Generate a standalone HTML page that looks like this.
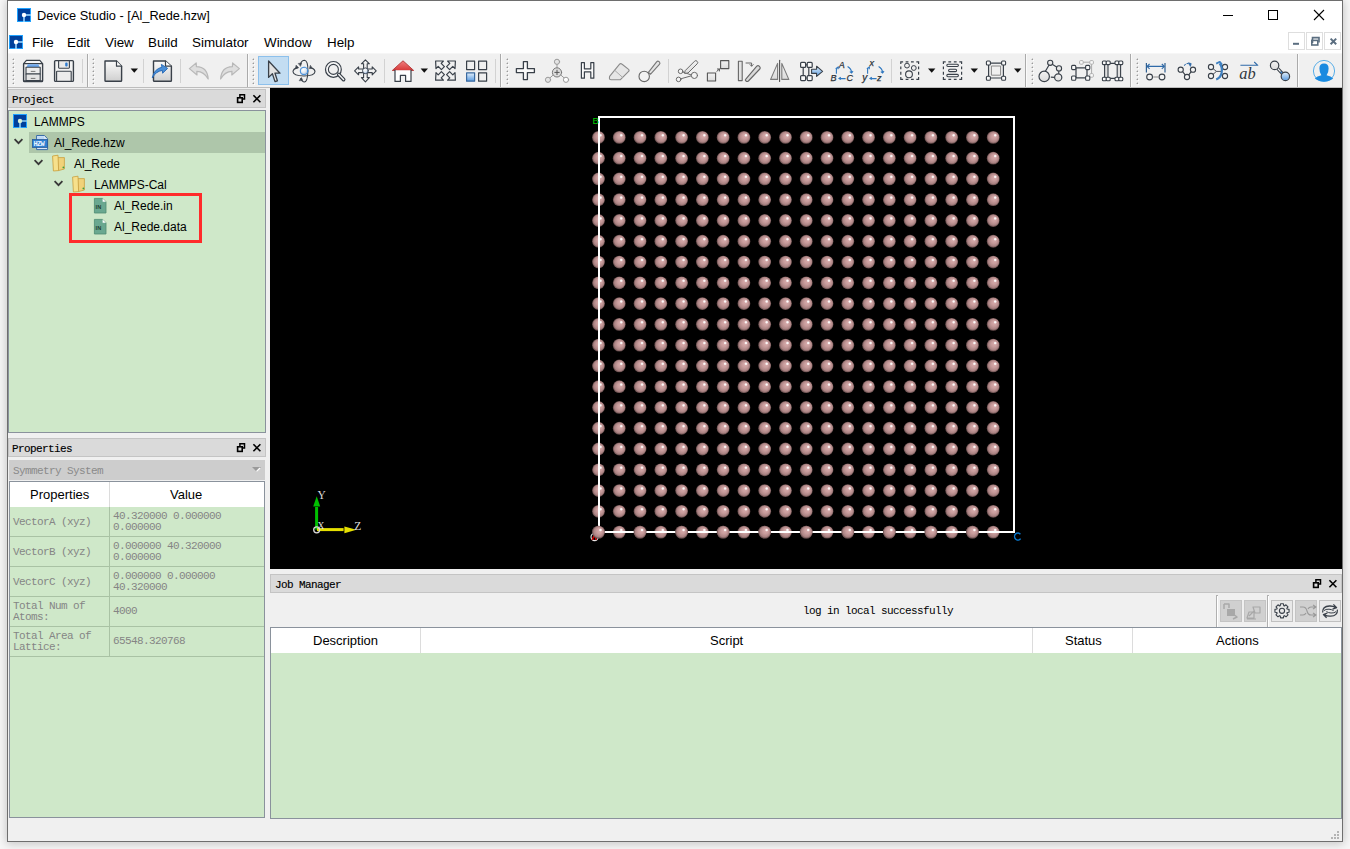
<!DOCTYPE html>
<html><head><meta charset="utf-8">
<style>
*{margin:0;padding:0;box-sizing:border-box}
html,body{width:1350px;height:849px;overflow:hidden;background:#f7f7f7;font-family:"Liberation Sans",sans-serif;color:#000}
.a{position:absolute}
.t{position:absolute;white-space:nowrap;line-height:1}
.m{font-family:"Liberation Mono",monospace;letter-spacing:-0.6px}
.g{position:absolute;background:#cfe8c9}
</style></head><body>
<!-- desktop shadow -->
<!-- window -->
<div class="a" style="left:7px;top:0;width:1336px;height:842px;border:1px solid #6e6e6e;background:#f0f0f0;box-shadow:0 1px 9px 1px rgba(0,0,0,0.2)"></div>
<div class="a" style="left:8px;top:1px;width:1334px;height:52px;background:#fff"></div>
<div class="a" style="left:8px;top:53px;width:1334px;height:1px;background:#f6f6f6"></div>
<!-- title bar -->
<svg class="a" style="left:0;top:0" width="40" height="50">
<rect x="17.5" y="8.5" width="13" height="13" fill="#00419c" stroke="#1fa2ff" stroke-width="1"/>
<path d="M24,15 H31" stroke="#9ad8ff" stroke-width="1.6"/><path d="M24,15 V22" stroke="#9ad8ff" stroke-width="1.6"/>
<circle cx="24" cy="15" r="2.2" fill="#fff"/>
<rect x="9.5" y="35.5" width="13" height="13" fill="#00419c" stroke="#1fa2ff" stroke-width="1"/>
<path d="M16,42 H23" stroke="#9ad8ff" stroke-width="1.6"/><path d="M16,42 V49" stroke="#9ad8ff" stroke-width="1.6"/>
<circle cx="16" cy="42" r="2.2" fill="#fff"/>
</svg>
<div class="t" style="left:37px;top:10px;font-size:12.8px">Device Studio - [Al_Rede.hzw]</div>
<div class="a" style="left:1223px;top:15px;width:10px;height:1px;background:#000"></div>
<div class="a" style="left:1268px;top:10px;width:10px;height:10px;border:1px solid #000"></div>
<svg class="a" style="left:1312px;top:8px" width="14" height="14"><path d="M2,2 L12,12 M12,2 L2,12" stroke="#000" stroke-width="1.1"/></svg>
<!-- menu -->
<div class="t" style="left:32px;top:36.4px;font-size:13.4px">File</div>
<div class="t" style="left:67px;top:36.4px;font-size:13.4px">Edit</div>
<div class="t" style="left:105px;top:36.4px;font-size:13.4px">View</div>
<div class="t" style="left:148px;top:36.4px;font-size:13.4px">Build</div>
<div class="t" style="left:192px;top:36.4px;font-size:13.4px">Simulator</div>
<div class="t" style="left:264px;top:36.4px;font-size:13.4px">Window</div>
<div class="t" style="left:327px;top:36.4px;font-size:13.4px">Help</div>
<!-- mdi buttons -->
<div class="a" style="left:1288px;top:32px;width:17px;height:18px;border:1px solid #dedede"></div>
<div class="a" style="left:1306px;top:32px;width:17px;height:18px;border:1px solid #dedede"></div>
<div class="a" style="left:1324px;top:32px;width:17px;height:18px;border:1px solid #dedede"></div>
<svg class="a" style="left:1288px;top:32px" width="54" height="18">
<rect x="5" y="10.8" width="6" height="2" fill="#5b6e80"/>
<path d="M24.5,11 V5.6 H31 V10.4" fill="none" stroke="#5b6e80" stroke-width="1.6"/>
<rect x="23.8" y="8.4" width="6" height="4.6" fill="none" stroke="#5b6e80" stroke-width="1.6"/>
<path d="M42.6,6.6 L48.2,12.2 M48.2,6.6 L42.6,12.2" stroke="#5b6e80" stroke-width="2"/>
</svg>
<!-- toolbar -->
<div class="a" style="left:8px;top:54px;width:1334px;height:33px;background:#f0f0f0"></div>
<div class="a" style="left:8px;top:87px;width:1334px;height:1px;background:#bdbdbd"></div>
<div class="a" style="left:13px;top:59px;width:1px;height:1px;background:#9a9a9a;box-shadow:-1px 0 #cdcdcd,0 -1px #cdcdcd,1px 1px #fff"></div>
<div class="a" style="left:13px;top:63px;width:1px;height:1px;background:#9a9a9a;box-shadow:-1px 0 #cdcdcd,0 -1px #cdcdcd,1px 1px #fff"></div>
<div class="a" style="left:13px;top:67px;width:1px;height:1px;background:#9a9a9a;box-shadow:-1px 0 #cdcdcd,0 -1px #cdcdcd,1px 1px #fff"></div>
<div class="a" style="left:13px;top:71px;width:1px;height:1px;background:#9a9a9a;box-shadow:-1px 0 #cdcdcd,0 -1px #cdcdcd,1px 1px #fff"></div>
<div class="a" style="left:13px;top:75px;width:1px;height:1px;background:#9a9a9a;box-shadow:-1px 0 #cdcdcd,0 -1px #cdcdcd,1px 1px #fff"></div>
<div class="a" style="left:13px;top:79px;width:1px;height:1px;background:#9a9a9a;box-shadow:-1px 0 #cdcdcd,0 -1px #cdcdcd,1px 1px #fff"></div>
<div class="a" style="left:13px;top:83px;width:1px;height:1px;background:#9a9a9a;box-shadow:-1px 0 #cdcdcd,0 -1px #cdcdcd,1px 1px #fff"></div>
<div class="a" style="left:93px;top:59px;width:1px;height:1px;background:#9a9a9a;box-shadow:-1px 0 #cdcdcd,0 -1px #cdcdcd,1px 1px #fff"></div>
<div class="a" style="left:93px;top:63px;width:1px;height:1px;background:#9a9a9a;box-shadow:-1px 0 #cdcdcd,0 -1px #cdcdcd,1px 1px #fff"></div>
<div class="a" style="left:93px;top:67px;width:1px;height:1px;background:#9a9a9a;box-shadow:-1px 0 #cdcdcd,0 -1px #cdcdcd,1px 1px #fff"></div>
<div class="a" style="left:93px;top:71px;width:1px;height:1px;background:#9a9a9a;box-shadow:-1px 0 #cdcdcd,0 -1px #cdcdcd,1px 1px #fff"></div>
<div class="a" style="left:93px;top:75px;width:1px;height:1px;background:#9a9a9a;box-shadow:-1px 0 #cdcdcd,0 -1px #cdcdcd,1px 1px #fff"></div>
<div class="a" style="left:93px;top:79px;width:1px;height:1px;background:#9a9a9a;box-shadow:-1px 0 #cdcdcd,0 -1px #cdcdcd,1px 1px #fff"></div>
<div class="a" style="left:93px;top:83px;width:1px;height:1px;background:#9a9a9a;box-shadow:-1px 0 #cdcdcd,0 -1px #cdcdcd,1px 1px #fff"></div>
<div class="a" style="left:253px;top:59px;width:1px;height:1px;background:#9a9a9a;box-shadow:-1px 0 #cdcdcd,0 -1px #cdcdcd,1px 1px #fff"></div>
<div class="a" style="left:253px;top:63px;width:1px;height:1px;background:#9a9a9a;box-shadow:-1px 0 #cdcdcd,0 -1px #cdcdcd,1px 1px #fff"></div>
<div class="a" style="left:253px;top:67px;width:1px;height:1px;background:#9a9a9a;box-shadow:-1px 0 #cdcdcd,0 -1px #cdcdcd,1px 1px #fff"></div>
<div class="a" style="left:253px;top:71px;width:1px;height:1px;background:#9a9a9a;box-shadow:-1px 0 #cdcdcd,0 -1px #cdcdcd,1px 1px #fff"></div>
<div class="a" style="left:253px;top:75px;width:1px;height:1px;background:#9a9a9a;box-shadow:-1px 0 #cdcdcd,0 -1px #cdcdcd,1px 1px #fff"></div>
<div class="a" style="left:253px;top:79px;width:1px;height:1px;background:#9a9a9a;box-shadow:-1px 0 #cdcdcd,0 -1px #cdcdcd,1px 1px #fff"></div>
<div class="a" style="left:253px;top:83px;width:1px;height:1px;background:#9a9a9a;box-shadow:-1px 0 #cdcdcd,0 -1px #cdcdcd,1px 1px #fff"></div>
<div class="a" style="left:507px;top:59px;width:1px;height:1px;background:#9a9a9a;box-shadow:-1px 0 #cdcdcd,0 -1px #cdcdcd,1px 1px #fff"></div>
<div class="a" style="left:507px;top:63px;width:1px;height:1px;background:#9a9a9a;box-shadow:-1px 0 #cdcdcd,0 -1px #cdcdcd,1px 1px #fff"></div>
<div class="a" style="left:507px;top:67px;width:1px;height:1px;background:#9a9a9a;box-shadow:-1px 0 #cdcdcd,0 -1px #cdcdcd,1px 1px #fff"></div>
<div class="a" style="left:507px;top:71px;width:1px;height:1px;background:#9a9a9a;box-shadow:-1px 0 #cdcdcd,0 -1px #cdcdcd,1px 1px #fff"></div>
<div class="a" style="left:507px;top:75px;width:1px;height:1px;background:#9a9a9a;box-shadow:-1px 0 #cdcdcd,0 -1px #cdcdcd,1px 1px #fff"></div>
<div class="a" style="left:507px;top:79px;width:1px;height:1px;background:#9a9a9a;box-shadow:-1px 0 #cdcdcd,0 -1px #cdcdcd,1px 1px #fff"></div>
<div class="a" style="left:507px;top:83px;width:1px;height:1px;background:#9a9a9a;box-shadow:-1px 0 #cdcdcd,0 -1px #cdcdcd,1px 1px #fff"></div>
<div class="a" style="left:1032px;top:59px;width:1px;height:1px;background:#9a9a9a;box-shadow:-1px 0 #cdcdcd,0 -1px #cdcdcd,1px 1px #fff"></div>
<div class="a" style="left:1032px;top:63px;width:1px;height:1px;background:#9a9a9a;box-shadow:-1px 0 #cdcdcd,0 -1px #cdcdcd,1px 1px #fff"></div>
<div class="a" style="left:1032px;top:67px;width:1px;height:1px;background:#9a9a9a;box-shadow:-1px 0 #cdcdcd,0 -1px #cdcdcd,1px 1px #fff"></div>
<div class="a" style="left:1032px;top:71px;width:1px;height:1px;background:#9a9a9a;box-shadow:-1px 0 #cdcdcd,0 -1px #cdcdcd,1px 1px #fff"></div>
<div class="a" style="left:1032px;top:75px;width:1px;height:1px;background:#9a9a9a;box-shadow:-1px 0 #cdcdcd,0 -1px #cdcdcd,1px 1px #fff"></div>
<div class="a" style="left:1032px;top:79px;width:1px;height:1px;background:#9a9a9a;box-shadow:-1px 0 #cdcdcd,0 -1px #cdcdcd,1px 1px #fff"></div>
<div class="a" style="left:1032px;top:83px;width:1px;height:1px;background:#9a9a9a;box-shadow:-1px 0 #cdcdcd,0 -1px #cdcdcd,1px 1px #fff"></div>
<div class="a" style="left:1137px;top:59px;width:1px;height:1px;background:#9a9a9a;box-shadow:-1px 0 #cdcdcd,0 -1px #cdcdcd,1px 1px #fff"></div>
<div class="a" style="left:1137px;top:63px;width:1px;height:1px;background:#9a9a9a;box-shadow:-1px 0 #cdcdcd,0 -1px #cdcdcd,1px 1px #fff"></div>
<div class="a" style="left:1137px;top:67px;width:1px;height:1px;background:#9a9a9a;box-shadow:-1px 0 #cdcdcd,0 -1px #cdcdcd,1px 1px #fff"></div>
<div class="a" style="left:1137px;top:71px;width:1px;height:1px;background:#9a9a9a;box-shadow:-1px 0 #cdcdcd,0 -1px #cdcdcd,1px 1px #fff"></div>
<div class="a" style="left:1137px;top:75px;width:1px;height:1px;background:#9a9a9a;box-shadow:-1px 0 #cdcdcd,0 -1px #cdcdcd,1px 1px #fff"></div>
<div class="a" style="left:1137px;top:79px;width:1px;height:1px;background:#9a9a9a;box-shadow:-1px 0 #cdcdcd,0 -1px #cdcdcd,1px 1px #fff"></div>
<div class="a" style="left:1137px;top:83px;width:1px;height:1px;background:#9a9a9a;box-shadow:-1px 0 #cdcdcd,0 -1px #cdcdcd,1px 1px #fff"></div>
<div class="a" style="left:82px;top:59px;width:1px;height:24px;background:#d2d2d2"></div>
<div class="a" style="left:143px;top:59px;width:1px;height:24px;background:#d2d2d2"></div>
<div class="a" style="left:180px;top:59px;width:1px;height:24px;background:#d2d2d2"></div>
<div class="a" style="left:384px;top:59px;width:1px;height:24px;background:#d2d2d2"></div>
<div class="a" style="left:495px;top:59px;width:1px;height:24px;background:#d2d2d2"></div>
<div class="a" style="left:668px;top:59px;width:1px;height:24px;background:#d2d2d2"></div>
<div class="a" style="left:891px;top:59px;width:1px;height:24px;background:#d2d2d2"></div>
<div class="a" style="left:87px;top:54px;width:1px;height:33px;background:#aaaaaa"></div><div class="a" style="left:88px;top:54px;width:1px;height:33px;background:#fafafa"></div>
<div class="a" style="left:247px;top:54px;width:1px;height:33px;background:#aaaaaa"></div><div class="a" style="left:248px;top:54px;width:1px;height:33px;background:#fafafa"></div>
<div class="a" style="left:500px;top:54px;width:1px;height:33px;background:#aaaaaa"></div><div class="a" style="left:501px;top:54px;width:1px;height:33px;background:#fafafa"></div>
<div class="a" style="left:1025px;top:54px;width:1px;height:33px;background:#aaaaaa"></div><div class="a" style="left:1026px;top:54px;width:1px;height:33px;background:#fafafa"></div>
<div class="a" style="left:1130px;top:54px;width:1px;height:33px;background:#aaaaaa"></div><div class="a" style="left:1131px;top:54px;width:1px;height:33px;background:#fafafa"></div>
<div class="a" style="left:1297px;top:54px;width:1px;height:33px;background:#aaaaaa"></div><div class="a" style="left:1298px;top:54px;width:1px;height:33px;background:#fafafa"></div><svg class="a" style="left:0;top:0" width="1350" height="100" viewBox="0 0 1350 100">
<defs>
<linearGradient id="gg" x1="0" y1="0" x2="0" y2="1"><stop offset="0" stop-color="#fbfbfb"/><stop offset="1" stop-color="#cfcfcf"/></linearGradient>
<linearGradient id="gl" x1="0" y1="0" x2="0" y2="1"><stop offset="0" stop-color="#f2f2f2"/><stop offset="1" stop-color="#dcdcdc"/></linearGradient>
<radialGradient id="gb" cx="0.4" cy="0.35" r="0.7"><stop offset="0" stop-color="#ffffff"/><stop offset="0.35" stop-color="#9cc6f2"/><stop offset="1" stop-color="#2f78c8"/></radialGradient>
<radialGradient id="gsph" cx="0.4" cy="0.35" r="0.75"><stop offset="0" stop-color="#ffffff"/><stop offset="0.5" stop-color="#dfe8f2"/><stop offset="1" stop-color="#6d9fd8"/></radialGradient>
<linearGradient id="gbl" x1="0" y1="0" x2="0" y2="1"><stop offset="0" stop-color="#e4f0fb"/><stop offset="1" stop-color="#5a9be0"/></linearGradient>
<linearGradient id="gred" x1="0" y1="0" x2="0" y2="1"><stop offset="0" stop-color="#f08080"/><stop offset="1" stop-color="#d83a3a"/></linearGradient>
</defs>
<g fill="none" stroke="#394049" stroke-width="1.4" stroke-linejoin="round" stroke-linecap="round">
<!-- open cabinet -->
<path d="M23.6,64 V80.8 Q23.6,81.6 24.4,81.6 H41.8 Q42.6,81.6 42.6,80.8 V64" fill="#f4f4f4"/>
<path d="M26.4,60.4 H39.8 L42.6,63.6 H23.6 Z" fill="#f6f6f6" stroke-width="1.2"/>
<path d="M27.8,64.2 H38.4 L39.6,67 H26.6 Z" fill="#6ea8ee" stroke="none"/>
<rect x="26" y="67.2" width="14.2" height="6.8" fill="#ededed" stroke-width="1.1"/>
<rect x="26" y="74" width="14.2" height="6.6" fill="#e4e4e4" stroke-width="1.1"/>
<path d="M31.2,71.4 H35 M31.2,78.4 H35" stroke="#6a6a6a" stroke-width="0.9"/>
<path d="M24.4,81 H41.8" stroke-width="1.4"/>
<!-- save -->
<rect x="54.6" y="60.6" width="18.8" height="20.8" rx="1" fill="#f3f3f3"/>
<rect x="58.6" y="60.6" width="10.8" height="7.6" rx="0.6" fill="#eaeaea" stroke-width="1.1"/>
<rect x="65.2" y="62.4" width="2.4" height="4.2" rx="1" fill="#2f7cd0" stroke="none"/>
<rect x="56.6" y="71.2" width="14.6" height="10.2" rx="0.6" fill="#ececec" stroke-width="1.1"/>
<!-- new doc -->
<path d="M105,61 H116.5 L121.6,66.2 V80.4 Q121.6,81.2 120.8,81.2 H105.8 Q105,81.2 105,80.4 Z" fill="url(#gg)"/>
<path d="M116.5,61 V66.2 H121.6" fill="#fff" stroke-width="1.2"/>
<!-- export doc -->
<path d="M153.5,61 H165.5 L171.4,66.2 V80.4 Q171.4,81.2 170.6,81.2 H154.3 Q153.5,81.2 153.5,80.4 Z" fill="url(#gg)"/>
<path d="M165.5,61 V66.2 H171.4" fill="#fff" stroke-width="1.2"/>
<path d="M152.4,77.5 Q154,69 162,67.2 L161.4,64.4 L167.6,68.4 L162.6,73.2 L162.4,70.4 Q156,71.2 152.4,77.5 Z" fill="#4a8fd8" stroke="#2a6cb8" stroke-width="1"/>
<!-- undo redo -->
<path d="M189.4,68.6 L196.2,63 L196.4,66.6 Q207.4,66.8 208.2,79 Q204,71.6 196.8,71.4 L197,75 Z" fill="#dedede" stroke="#b8b8b8" stroke-width="1.2"/>
<path d="M239.4,68.6 L232.6,63 L232.4,66.6 Q221.4,66.8 220.6,79 Q224.8,71.6 232,71.4 L231.8,75 Z" fill="#dedede" stroke="#b8b8b8" stroke-width="1.2"/>
</g>
<!-- dropdown triangles -->
<g fill="#111">
<path d="M130.6,68.6 H138 L134.3,72.8 Z"/>
<path d="M420.6,68.6 H428 L424.3,72.8 Z"/>
<path d="M928,68.6 H935.4 L931.7,72.8 Z"/>
<path d="M970.6,68.6 H978 L974.3,72.8 Z"/>
<path d="M1014,68.6 H1021.4 L1017.7,72.8 Z"/>
</g>
<!-- selected button -->
<rect x="258.5" y="56.5" width="30" height="28" fill="#c3ddf2" stroke="#8cc0ec" stroke-width="1"/>
<g fill="none" stroke="#394049" stroke-width="1.3" stroke-linejoin="round" stroke-linecap="round">
<path d="M268.6,61 V77.4 L272.4,73.8 L275,81.6 L277.4,80.8 L275,73.2 H280 Z" fill="#e2e2e2"/>
<!-- rotate -->
<path d="M297.6,67.6 Q293,68.8 293,71.8 Q293.4,75.8 304,76 Q314.6,75.8 315,71.8 Q315,69.4 311.8,68" stroke-width="1.1"/>
<path d="M300.4,64 Q301.8,60.2 304.6,60.2 Q308,60.6 307.9,71 Q307.6,81.8 304.4,82 Q302.2,81.8 300.8,78.6" stroke-width="1.1"/>
<path d="M296.4,65.4 L298.6,67.8 L295.6,68.6 Z M310.6,65.6 L312.2,68.4 L309.6,68.6 Z M298.6,63.4 L301.6,63.2 L300.6,66 Z M299.4,80.4 L301.4,77.6 L302.6,80.2 Z" fill="#394049" stroke-width="0.6"/>
<circle cx="304" cy="71" r="3.8" fill="url(#gsph)" stroke="#3a88d8" stroke-width="1"/>
<!-- zoom -->
<circle cx="333.4" cy="69.4" r="7.9" fill="#f6f6f6" stroke-width="1.2"/>
<circle cx="333.4" cy="69.4" r="5" fill="#f0f0f0" stroke-width="1.1"/>
<path d="M338.8,74.6 L343.6,79.6" stroke-width="3.8"/>
<path d="M338.8,74.6 L343.6,79.6" stroke="#f4f4f4" stroke-width="1.4"/>
<!-- move -->
<path d="M365.4,59.8 L369.4,63.8 H367.2 V69 H372.2 V66.8 L376.2,70.8 L372.2,74.8 V72.6 H367.2 V77.6 H369.4 L365.4,81.8 L361.4,77.6 H363.6 V72.6 H358.6 V74.8 L354.6,70.8 L358.6,66.8 V69 H363.6 V63.8 H361.4 Z" fill="#f2f2f2" stroke-width="1.1"/>
<circle cx="365.4" cy="70.8" r="2.9" fill="url(#gsph)" stroke="#394049" stroke-width="0.9"/>
<!-- home -->
<path d="M392.6,70.2 L403,60.8 L413.4,70.2 Z" fill="url(#gred)" stroke="#b84040" stroke-width="1"/>
<path d="M395,70.2 V81.4 H400.4 V75.4 H405.6 V81.4 H411 V70.2" fill="#fff" stroke-width="1.2"/>
<!-- fit -->
<g stroke-width="1.2">
<path d="M435.6,61 H443.4 L441.2,63.4 L444.4,66.6 L441.4,69.6 L438.2,66.4 L436,68.6 Z"/>
<path d="M455.4,61 H447.6 L449.8,63.4 L446.6,66.6 L449.6,69.6 L452.8,66.4 L455,68.6 Z"/>
<path d="M435.6,80.2 H443.4 L441.2,77.8 L444.4,74.6 L441.4,71.6 L438.2,74.8 L436,72.6 Z"/>
<path d="M455.4,80.2 H447.6 L449.8,77.8 L446.6,74.6 L449.6,71.6 L452.8,74.8 L455,72.6 Z"/>
</g>
<!-- grid -->
<rect x="466.6" y="61.2" width="8" height="8.4" stroke-width="1.2"/>
<rect x="478.6" y="61.2" width="8" height="8.4" stroke-width="1.2"/>
<rect x="466.6" y="72.8" width="8" height="8.4" fill="url(#gbl)" stroke="#3a6aa0" stroke-width="1.2"/>
<rect x="478.6" y="72.8" width="8" height="8.4" stroke-width="1.2"/>
<!-- plus -->
<path d="M523.4,61.6 H527.4 V68.6 H534.4 V72.6 H527.4 V79.6 H523.4 V72.6 H516.4 V68.6 H523.4 Z" fill="#fafafa" stroke-width="1.3"/>
<!-- atom add -->
<g stroke="#9a9a9a" stroke-width="1">
<path d="M557,64 V68 M553.6,74.6 L549.6,78.2 M560.4,74.6 L564.4,78.2"/>
<circle cx="557" cy="61.8" r="2.6" fill="#e4e4e4"/>
<circle cx="548" cy="79.8" r="2.6" fill="#e4e4e4"/>
<circle cx="566" cy="79.8" r="2.6" fill="#fff"/>
<circle cx="557" cy="72.4" r="4.6" fill="#dcdcdc" stroke="#777"/>
<path d="M557,70.2 V74.6 M554.8,72.4 H559.2" stroke="#555"/>
</g>
<!-- H -->
<path d="M581.4,62.6 H584.4 V68.8 H590.8 V62.6 H593.8 V78.2 H590.8 V71.8 H584.4 V78.2 H581.4 Z" fill="#fafafa" stroke-width="1.2"/>
<!-- eraser -->
<path d="M609.6,76.4 L619.6,64.2 Q620.6,63 621.8,64 L628.6,69.4 Q629.6,70.4 628.6,71.4 L620.2,79.8 H611 Q609.4,79.8 609.4,78.2 Z" fill="#e6e6e6" stroke="#8a8a8a" stroke-width="1.1"/>
<path d="M614.6,70.2 L622.6,77.4" stroke="#aaa" stroke-width="1"/>
<!-- atom edit -->
<circle cx="644.2" cy="76.4" r="5.2" fill="#f2f2f2" stroke="#666" stroke-width="1.1"/>
<path d="M648.4,72.4 L656.6,61.8 Q657.8,60.6 659,61.6 L659.6,62.2 Q660.4,63.4 659.4,64.4 L650.6,74.2 Z" fill="#e4e4e4" stroke="#777" stroke-width="1.1"/>
<!-- bond edit -->
<g stroke="#6a6a6a" stroke-width="1">
<path d="M682.8,72 L691.4,75 M680.8,78.8 L691.4,75.8"/>
<circle cx="680.6" cy="71.3" r="2.3" fill="#f4f4f4"/>
<circle cx="678.6" cy="79.4" r="2.3" fill="#f4f4f4"/>
<circle cx="694.4" cy="75.4" r="3.1" fill="#f4f4f4"/>
<path d="M685.4,70.4 L694.6,61.2 Q695.8,60 697,61.2 L697.2,61.4 Q698.4,62.6 697.2,63.8 L688,73 L685,73.4 Z" fill="url(#gl)"/>
</g>
<!-- scale -->
<g stroke="#555" stroke-width="1.1">
<rect x="707.4" y="73" width="8.2" height="8" fill="url(#gl)"/>
<rect x="720.6" y="60.6" width="8.2" height="8" fill="url(#gl)"/>
<path d="M716.8,71.4 L719.4,69 M717.4,69 H719.4 V71" stroke-width="1"/>
</g>
<!-- rotate plane -->
<g stroke="#666" stroke-width="1.1">
<rect x="738.4" y="61.2" width="3.8" height="19.4" fill="#e4e4e4"/>
<path d="M745.6,79.4 L756.8,66.2 Q758,65 759.2,66.2 L759.8,66.8 Q760.8,68 759.8,69 L748.4,81 Q747,82 746,81 Q744.8,80.2 745.6,79.4 Z" fill="#dadada"/>
<path d="M746,63 H751.6 L751.6,66 M750,64.6 L751.6,66.2 L753.2,64.6" stroke-width="1"/>
</g>
<!-- mirror -->
<g stroke="#7a7a7a" stroke-width="1.1" stroke-linejoin="round">
<path d="M779.6,60.2 V81.4" stroke="#505050"/>
<path d="M777.6,63.4 V79.4 H770.6 Z" fill="url(#gl)"/>
<path d="M781.8,63.4 V79.4 H788.8 Z" fill="url(#gl)"/>
</g>
<!-- translate box -->
<g stroke-width="1.2">
<path d="M803.2,67.6 V75.4 M808.8,67.6 V75.4 M805.8,64.8 H807.4 M805.8,78 H807.4"/>
<rect x="800.6" y="62.4" width="5" height="5" rx="1" fill="#fafafa"/>
<rect x="807.2" y="62.4" width="5" height="5" rx="1" fill="#fafafa"/>
<rect x="800.6" y="75.6" width="5" height="5" rx="1" fill="#fafafa"/>
<rect x="807.2" y="75.6" width="5" height="5" rx="1" fill="#fafafa"/>
<path d="M811.6,69.2 H816.6 V66.2 L822.6,71.3 L816.6,76.4 V73.4 H811.6 Z" fill="url(#gbl)" stroke="#394049" stroke-width="1.1"/>
</g>
</g>
<!-- ABC / xyz -->
<g font-family="Liberation Sans" font-style="italic" fill="#2c3238" font-size="9" stroke="#2c3238" stroke-width="0.25">
<text x="838.8" y="67.6">A</text><text x="830.4" y="81.4">B</text><text x="846.4" y="81.4">C</text>
<text x="869.6" y="66.4">x</text><text x="862.2" y="80.8" font-size="10">y</text><text x="877" y="80.8">z</text>
</g>
<g fill="none" stroke="#2f78c0" stroke-width="1.1">
<path d="M836.4,73.8 V68.2 L838.2,67 M835.6,68.6 L838.2,67 L838,69.2"/>
<path d="M847.6,66.4 Q851.4,68.6 851.6,72.6 M849.8,71.6 L851.6,73 L853,71.2"/>
<path d="M845.6,78.6 H839.4 M840.8,77.2 L839,78.4 L840.8,79.6"/>
<path d="M867.6,73.8 V68.2 L869.4,67 M866.8,68.6 L869.4,67 L869.2,69.2"/>
<path d="M878.6,66.4 Q882.4,68.6 882.6,72.6 M880.8,71.6 L882.6,73 L884,71.2"/>
<path d="M876.6,78.6 H870.4 M871.8,77.2 L870,78.4 L871.8,79.6"/>
</g>
<g fill="none" stroke="#394049" stroke-width="1.3" stroke-linejoin="round">
<!-- select group -->
<path d="M900.8,64.1 V61.8 H903.0999999999999 M916.3000000000001,61.8 H918.6 V64.1 M918.6,77.10000000000001 V79.4 H916.3000000000001 M903.0999999999999,79.4 H900.8 V77.10000000000001 M905.63,61.8 H908.43 M905.63,79.4 H908.43 M910.97,61.8 H913.77 M910.97,79.4 H913.77 M900.8,66.57 V69.37 M918.6,66.57 V69.37 M900.8,71.83 V74.63 M918.6,71.83 V74.63" stroke-width="1.2" stroke-linecap="butt" stroke-linejoin="miter"/>
<circle cx="907" cy="65.6" r="2.4" stroke-width="1"/>
<circle cx="913.8" cy="68" r="2.4" stroke-width="1"/>
<circle cx="909" cy="74.3" r="3.4" stroke-width="1.1"/>
<!-- select lines -->
<path d="M943.4,64.1 V61.8 H945.6999999999999 M959.3000000000001,61.8 H961.6 V64.1 M961.6,77.10000000000001 V79.4 H959.3000000000001 M945.6999999999999,79.4 H943.4 V77.10000000000001 M948.37,61.8 H951.17 M948.37,79.4 H951.17 M953.83,61.8 H956.63 M953.83,79.4 H956.63 M943.4,66.57 V69.37 M961.6,66.57 V69.37 M943.4,71.83 V74.63 M961.6,71.83 V74.63" stroke-width="1.2" stroke-linecap="butt" stroke-linejoin="miter"/>
<rect x="946.8" y="64.2" width="11.6" height="2.3" rx="1.15" stroke-width="1.1"/>
<rect x="948.6" y="69.3" width="8" height="2.3" rx="1.15" stroke-width="1.1"/>
<rect x="946.8" y="74.4" width="11.6" height="2.3" rx="1.15" stroke-width="1.1"/>
<!-- box -->
<rect x="988.6" y="63.2" width="14.8" height="14.8" stroke-width="1.2"/>
<rect x="991.4" y="66" width="9.2" height="9.2" stroke="#888" stroke-width="1"/>
<rect x="986.4" y="61" width="4" height="4" rx="1" fill="#fafafa" stroke-width="1.1"/>
<rect x="1001.6" y="61" width="4" height="4" rx="1" fill="#fafafa" stroke-width="1.1"/>
<rect x="986.4" y="76.2" width="4" height="4" rx="1" fill="#fafafa" stroke-width="1.1"/>
<rect x="1001.6" y="76.2" width="4" height="4" rx="1" fill="#fafafa" stroke-width="1.1"/>
<!-- molecule -->
<path d="M1044.4,73 L1050.2,63 L1059,68.4 L1058.6,75 M1050.8,77.2 L1054.6,77.4" stroke-width="1.2"/>
<circle cx="1044.2" cy="76.4" r="5.2" fill="url(#gl)" stroke-width="1.2"/>
<circle cx="1050.2" cy="62.8" r="2.6" fill="url(#gl)" stroke-width="1.1"/>
<circle cx="1059" cy="68.4" r="2.6" fill="url(#gl)" stroke-width="1.1"/>
<circle cx="1058.2" cy="77.4" r="3.6" fill="url(#gl)" stroke-width="1.2"/>
<!-- supercell -->
<path d="M1076,67.8 H1087 V77.8 H1076 Z" stroke-width="1.2"/>
<path d="M1081,62.2 H1091.6 V75" stroke="#aaa" stroke-width="1"/>
<rect x="1079.6" y="60.6" width="3.6" height="3.6" rx="1" fill="#fafafa" stroke="#aaa" stroke-width="0.9"/>
<rect x="1089.8" y="60.6" width="3.6" height="3.6" rx="1" fill="#fafafa" stroke="#aaa" stroke-width="0.9"/>
<rect x="1089.8" y="73.6" width="3.6" height="3.6" rx="1" fill="#fafafa" stroke="#aaa" stroke-width="0.9"/>
<rect x="1071.6" y="65.4" width="4.2" height="4.2" rx="1" fill="#fafafa" stroke-width="1.1"/>
<rect x="1085.6" y="65.4" width="4.2" height="4.2" rx="1" fill="#fafafa" stroke-width="1.1"/>
<rect x="1071.6" y="76" width="4.2" height="4.2" rx="1" fill="#fafafa" stroke-width="1.1"/>
<rect x="1085.6" y="76" width="4.2" height="4.2" rx="1" fill="#fafafa" stroke-width="1.1"/>
<!-- slab -->
<rect x="1104.6" y="63.4" width="3.4" height="15" fill="#e0e0e0" stroke-width="1.1"/>
<rect x="1117.2" y="63.4" width="3.4" height="15" fill="#e0e0e0" stroke-width="1.1"/>
<path d="M1107.8,63.4 H1117.2 M1107.8,78.4 H1117.2" stroke-width="1.1"/>
<rect x="1102.4" y="61" width="4" height="3.6" rx="1" fill="#fafafa" stroke-width="1.1"/>
<rect x="1106.2" y="61" width="4" height="3.6" rx="1" fill="#fafafa" stroke-width="1.1"/>
<rect x="1115" y="61" width="4" height="3.6" rx="1" fill="#fafafa" stroke-width="1.1"/>
<rect x="1118.8" y="61" width="4" height="3.6" rx="1" fill="#fafafa" stroke-width="1.1"/>
<rect x="1102.4" y="77.2" width="4" height="3.6" rx="1" fill="#fafafa" stroke-width="1.1"/>
<rect x="1106.2" y="77.2" width="4" height="3.6" rx="1" fill="#fafafa" stroke-width="1.1"/>
<rect x="1115" y="77.2" width="4" height="3.6" rx="1" fill="#fafafa" stroke-width="1.1"/>
<rect x="1118.8" y="77.2" width="4" height="3.6" rx="1" fill="#fafafa" stroke-width="1.1"/>
<!-- distance -->
<path d="M1146.4,63 V72.4 M1165,63 V72.4" stroke="#2f5f90" stroke-width="1.2"/>
<path d="M1147,66.4 H1164.4 M1149.6,64 L1147,66.4 L1149.6,68.8 M1161.8,64 L1164.4,66.4 L1161.8,68.8" stroke="#2f6aa8" stroke-width="1.1"/>
<path d="M1153.2,77 H1158.4" stroke="#888" stroke-width="1"/>
<circle cx="1149.6" cy="77" r="2.9" fill="#f4f4f4" stroke-width="1.1"/>
<circle cx="1162" cy="77" r="2.9" fill="#f4f4f4" stroke-width="1.1"/>
<!-- angle -->
<path d="M1182.2,71.2 L1185.6,75.4 M1188.4,75.4 L1191.6,71.2" stroke-width="1.1"/>
<circle cx="1180.7" cy="69.7" r="2.6" fill="#f4f4f4" stroke-width="1.1"/>
<circle cx="1187" cy="77" r="2.6" fill="#f4f4f4" stroke-width="1.1"/>
<circle cx="1193" cy="69.7" r="2.6" fill="#f4f4f4" stroke-width="1.1"/>
<path d="M1184.2,65.6 Q1186.6,62.4 1189.6,64.2" stroke="#2f6aa8" stroke-width="1.1" stroke-dasharray="2,1"/>
<path d="M1188.4,62.8 L1191.2,63.6 L1190.4,66.4 Z" fill="#2f6aa8" stroke="#2f6aa8" stroke-width="0.8"/>
<!-- dihedral -->
<circle cx="1211" cy="67" r="2.6" fill="#f4f4f4" stroke-width="1.1"/>
<circle cx="1211" cy="76" r="2.6" fill="#f4f4f4" stroke-width="1.1"/>
<circle cx="1225" cy="67" r="2.6" fill="#f4f4f4" stroke-width="1.1"/>
<circle cx="1225" cy="76" r="2.6" fill="#f4f4f4" stroke-width="1.1"/>
<path d="M1213,68.6 L1216.4,71.4 L1213,74.4 M1216.4,71.4 H1221.6" stroke-width="0.9"/>
<path d="M1219.6,63.4 Q1222.8,67.6 1221.6,73 Q1220.6,77.6 1216.2,79.4" stroke="#3f80c0" stroke-width="2.2"/>
<path d="M1216.2,63.6 L1219.8,61.8 L1222,64.6" stroke="#3f80c0" stroke-width="1.8"/>
<!-- ab -->
<path d="M1240.4,65.3 H1257.8 L1254.2,62" stroke="#2f6aa8" stroke-width="1.1"/>
</g>
<text x="1239.2" y="79" font-family="Liberation Serif" font-style="italic" font-size="16.4" fill="#30363c">ab</text>
<!-- bond -->
<g stroke="#394049" stroke-width="1.2">
<path d="M1277.6,68.4 L1282.2,73.4" stroke-width="3.2"/>
<path d="M1277.6,68.4 L1280.6,71.6" stroke="#fff" stroke-width="1.2"/>
<path d="M1280.6,71.6 L1282.2,73.4" stroke="#4a8fd8" stroke-width="1.4"/>
<circle cx="1274.6" cy="65.4" r="4.2" fill="url(#gl)"/>
<circle cx="1285.4" cy="76.4" r="4.2" fill="url(#gbl)"/>
</g>
<!-- user -->
<circle cx="1324" cy="71" r="10.6" fill="none" stroke="#58aee8" stroke-width="1"/>
<path d="M1324,63.6 Q1328.6,63.6 1328.6,68.6 Q1328.6,73 1326.6,75.2 Q1331,76 1333.2,78.6 Q1329.6,81.6 1324,81.6 Q1318.4,81.6 1314.8,78.6 Q1317,76 1321.4,75.2 Q1319.4,73 1319.4,68.6 Q1319.4,63.6 1324,63.6 Z" fill="#1a8ae0"/>
</svg>
<!-- Project dock -->
<div class="a" style="left:8px;top:89px;width:258px;height:19px;background:#dadada;border:1px solid #c4c4c4"></div>
<div class="t m" style="left:12px;top:95px;font-size:11px;-webkit-text-stroke:0.15px #000">Project</div>
<svg class="a" style="left:230px;top:89px" width="36" height="19">
<path d="M9.9,8.2 V5.7 H14.5 V10.1 H12.6" fill="none" stroke="#000" stroke-width="1.5"/>
<rect x="7.6" y="8.8" width="4.6" height="4.6" fill="none" stroke="#000" stroke-width="1.6"/>
<path d="M23.4,6.2 L30.4,13.2 M30.4,6.2 L23.4,13.2" stroke="#000" stroke-width="1.6"/>
</svg>
<div class="a" style="left:8px;top:110px;width:258px;height:323px;background:#cfe8c9;border:1px solid #8a929c"></div>
<div class="a" style="left:29px;top:132px;width:236px;height:21px;background:#aec6aa"></div>
<svg class="a" style="left:0;top:100px" width="270" height="150">
<!-- lammps icon -->
<rect x="13.5" y="14.5" width="13" height="13" fill="#00419c" stroke="#1fa2ff" stroke-width="1"/>
<path d="M20,21 H27 M20,21 V28" stroke="#8fd0f0" stroke-width="1.6"/>
<circle cx="20" cy="21" r="2.2" fill="#d8f0d8"/>
<!-- chevrons -->
<g fill="none" stroke="#383838" stroke-width="1.8">
<path d="M14.6,39.2 L18.5,43.2 L22.4,39.2"/>
<path d="M34.6,60.2 L38.5,64.2 L42.4,60.2"/>
<path d="M54.6,81.2 L58.5,85.2 L62.4,81.2"/>
</g>
<!-- hzw icon -->
<path d="M36.6,35.5 H44.4 L47.6,38.7 V49.6 H36.6 Z" fill="#dbe8f6" stroke="#3a6ea8" stroke-width="1"/>
<rect x="37.6" y="36.4" width="6.4" height="2.6" fill="#bcd8f6"/>
<rect x="32.4" y="39.4" width="15" height="8" fill="#2f80d0" stroke="#2a5a9a" stroke-width="0.8"/>
<text x="33.4" y="46.2" font-family="Liberation Mono" font-size="7" font-weight="bold" fill="#e8f4ff" letter-spacing="-0.6">HZW</text>
<!-- folders -->
<g>
<path d="M52.6,56 L58,55.2 L58.6,70.6 L53.4,71 Z" fill="#e8c860"/>
<path d="M57.6,57.6 H64.4 V69 L58.4,70.6 Z" fill="#f0d27a" stroke="#c8a040" stroke-width="0.8"/>
<path d="M52.6,56 L58,55.2 L58.6,70.6 L53.4,71 Z" fill="#f6e08c" stroke="#c8a040" stroke-width="0.8"/>
<circle cx="63.4" cy="67.4" r="0.9" fill="#3aa040"/>
</g>
<g transform="translate(20,21)">
<path d="M57.6,57.6 H64.4 V69 L58.4,70.6 Z" fill="#f0d27a" stroke="#c8a040" stroke-width="0.8"/>
<path d="M52.6,56 L58,55.2 L58.6,70.6 L53.4,71 Z" fill="#f6e08c" stroke="#c8a040" stroke-width="0.8"/>
<circle cx="63.4" cy="67.4" r="0.9" fill="#3aa040"/>
</g>
<!-- IN icons -->
<g>
<path d="M94.4,98.4 H102.6 L106,101.8 V113 H94.4 Z" fill="#6aa890" stroke="#4e8a72" stroke-width="0.8"/>
<path d="M102.6,98.4 V101.8 H106 Z" fill="#fff"/>
<text x="95.6" y="109.4" font-family="Liberation Sans" font-size="5.6" font-weight="bold" fill="#1e3e30">IN</text>
</g>
<g transform="translate(0,21)">
<path d="M94.4,98.4 H102.6 L106,101.8 V113 H94.4 Z" fill="#6aa890" stroke="#4e8a72" stroke-width="0.8"/>
<path d="M102.6,98.4 V101.8 H106 Z" fill="#fff"/>
<text x="95.6" y="109.4" font-family="Liberation Sans" font-size="5.6" font-weight="bold" fill="#1e3e30">IN</text>
</g>
</svg>
<div class="t" style="left:34px;top:116px;font-size:12px">LAMMPS</div>
<div class="t" style="left:54px;top:137px;font-size:12px">Al_Rede.hzw</div>
<div class="t" style="left:74px;top:158px;font-size:12px">Al_Rede</div>
<div class="t" style="left:94px;top:179px;font-size:12px">LAMMPS-Cal</div>
<div class="t" style="left:114px;top:200px;font-size:12px">Al_Rede.in</div>
<div class="t" style="left:114px;top:221px;font-size:12px">Al_Rede.data</div>
<div class="a" style="left:69px;top:193px;width:133px;height:50px;border:3px solid #ff2b2b"></div>
<!-- Properties dock -->
<div class="a" style="left:8px;top:438px;width:258px;height:19px;background:#dadada;border:1px solid #c4c4c4"></div>
<div class="t m" style="left:12px;top:444px;font-size:11px;-webkit-text-stroke:0.15px #000">Properties</div>
<svg class="a" style="left:230px;top:438px" width="36" height="19">
<path d="M9.9,8.2 V5.7 H14.5 V10.1 H12.6" fill="none" stroke="#000" stroke-width="1.5"/>
<rect x="7.6" y="8.8" width="4.6" height="4.6" fill="none" stroke="#000" stroke-width="1.6"/>
<path d="M23.4,6.2 L30.4,13.2 M30.4,6.2 L23.4,13.2" stroke="#000" stroke-width="1.6"/>
</svg>
<div class="a" style="left:9px;top:460px;width:256px;height:20px;background:#cdcdcd"></div>
<div class="t m" style="left:13px;top:466px;font-size:11px;color:#8a8a8a">Symmetry System</div>
<svg class="a" style="left:250px;top:462px" width="14" height="14"><path d="M2,5 H11 L6.5,9.6 Z" fill="#9a9a9a"/><path d="M6.5,9.4 L10,6" stroke="#fff" stroke-width="1.2"/></svg>
<div class="a" style="left:9px;top:481px;width:256px;height:337px;background:#cfe8c9;border:1px solid #8a929c"></div>
<div class="a" style="left:10px;top:482px;width:254px;height:25px;background:#fff"></div>
<div class="a" style="left:109px;top:482px;width:1px;height:25px;background:#dcdcdc"></div>
<div class="a" style="left:109px;top:507px;width:1px;height:149px;background:#a9c2a4"></div>
<div class="a" style="left:10px;top:536px;width:254px;height:1px;background:#a9c2a4"></div>
<div class="a" style="left:10px;top:566px;width:254px;height:1px;background:#a9c2a4"></div>
<div class="a" style="left:10px;top:596px;width:254px;height:1px;background:#a9c2a4"></div>
<div class="a" style="left:10px;top:626px;width:254px;height:1px;background:#a9c2a4"></div>
<div class="a" style="left:10px;top:656px;width:254px;height:1px;background:#a9c2a4"></div>
<div class="t" style="left:30px;top:488px;font-size:13px">Properties</div>
<div class="t" style="left:170px;top:488px;font-size:13px">Value</div>
<div style="position:absolute;left:0;top:0;color:#858585;font-family:'Liberation Mono',monospace;font-size:11px;line-height:10.6px;letter-spacing:-0.6px">
<div class="a" style="left:13px;top:517px;white-space:pre">VectorA (xyz)</div>
<div class="a" style="left:13px;top:547px;white-space:pre">VectorB (xyz)</div>
<div class="a" style="left:13px;top:577px;white-space:pre">VectorC (xyz)</div>
<div class="a" style="left:13px;top:601px;white-space:pre">Total Num of<br>Atoms:</div>
<div class="a" style="left:13px;top:631px;white-space:pre">Total Area of<br>Lattice:</div>
<div class="a" style="left:113px;top:511px;white-space:pre">40.320000 0.000000<br>0.000000</div>
<div class="a" style="left:113px;top:541px;white-space:pre">0.000000 40.320000<br>0.000000</div>
<div class="a" style="left:113px;top:571px;white-space:pre">0.000000 0.000000<br>40.320000</div>
<div class="a" style="left:113px;top:606px;white-space:pre">4000</div>
<div class="a" style="left:113px;top:636px;white-space:pre">65548.320768</div>
</div>
<!-- viewport -->
<div class="a" style="left:270px;top:88px;width:1072px;height:481px;background:#000"></div>
<svg class="a" style="left:270px;top:88px" width="1072" height="481" viewBox="270 88 1072 481">
<defs>
<radialGradient id="ag" cx="0.5" cy="0.5" r="0.5" fx="0.64" fy="0.34">
<stop offset="0" stop-color="#dcb0b0"/><stop offset="0.45" stop-color="#c89c9c"/><stop offset="0.8" stop-color="#aa8282"/><stop offset="1" stop-color="#5e4646"/>
</radialGradient>
<radialGradient id="hl" cx="0.5" cy="0.5" r="0.5"><stop offset="0" stop-color="#fff" stop-opacity="1"/><stop offset="0.4" stop-color="#fff" stop-opacity="0.85"/><stop offset="1" stop-color="#fff" stop-opacity="0"/></radialGradient>
<g id="at"><circle cx="0" cy="0" r="6.4" fill="url(#ag)"/><circle cx="2" cy="-2.1" r="1.8" fill="url(#hl)"/></g>
</defs>
<use href="#at" x="598.50" y="137.40"/>
<use href="#at" x="619.27" y="137.40"/>
<use href="#at" x="640.05" y="137.40"/>
<use href="#at" x="660.82" y="137.40"/>
<use href="#at" x="681.60" y="137.40"/>
<use href="#at" x="702.37" y="137.40"/>
<use href="#at" x="723.14" y="137.40"/>
<use href="#at" x="743.92" y="137.40"/>
<use href="#at" x="764.69" y="137.40"/>
<use href="#at" x="785.47" y="137.40"/>
<use href="#at" x="806.24" y="137.40"/>
<use href="#at" x="827.01" y="137.40"/>
<use href="#at" x="847.79" y="137.40"/>
<use href="#at" x="868.56" y="137.40"/>
<use href="#at" x="889.34" y="137.40"/>
<use href="#at" x="910.11" y="137.40"/>
<use href="#at" x="930.88" y="137.40"/>
<use href="#at" x="951.66" y="137.40"/>
<use href="#at" x="972.43" y="137.40"/>
<use href="#at" x="993.21" y="137.40"/>
<use href="#at" x="598.50" y="158.17"/>
<use href="#at" x="619.27" y="158.17"/>
<use href="#at" x="640.05" y="158.17"/>
<use href="#at" x="660.82" y="158.17"/>
<use href="#at" x="681.60" y="158.17"/>
<use href="#at" x="702.37" y="158.17"/>
<use href="#at" x="723.14" y="158.17"/>
<use href="#at" x="743.92" y="158.17"/>
<use href="#at" x="764.69" y="158.17"/>
<use href="#at" x="785.47" y="158.17"/>
<use href="#at" x="806.24" y="158.17"/>
<use href="#at" x="827.01" y="158.17"/>
<use href="#at" x="847.79" y="158.17"/>
<use href="#at" x="868.56" y="158.17"/>
<use href="#at" x="889.34" y="158.17"/>
<use href="#at" x="910.11" y="158.17"/>
<use href="#at" x="930.88" y="158.17"/>
<use href="#at" x="951.66" y="158.17"/>
<use href="#at" x="972.43" y="158.17"/>
<use href="#at" x="993.21" y="158.17"/>
<use href="#at" x="598.50" y="178.95"/>
<use href="#at" x="619.27" y="178.95"/>
<use href="#at" x="640.05" y="178.95"/>
<use href="#at" x="660.82" y="178.95"/>
<use href="#at" x="681.60" y="178.95"/>
<use href="#at" x="702.37" y="178.95"/>
<use href="#at" x="723.14" y="178.95"/>
<use href="#at" x="743.92" y="178.95"/>
<use href="#at" x="764.69" y="178.95"/>
<use href="#at" x="785.47" y="178.95"/>
<use href="#at" x="806.24" y="178.95"/>
<use href="#at" x="827.01" y="178.95"/>
<use href="#at" x="847.79" y="178.95"/>
<use href="#at" x="868.56" y="178.95"/>
<use href="#at" x="889.34" y="178.95"/>
<use href="#at" x="910.11" y="178.95"/>
<use href="#at" x="930.88" y="178.95"/>
<use href="#at" x="951.66" y="178.95"/>
<use href="#at" x="972.43" y="178.95"/>
<use href="#at" x="993.21" y="178.95"/>
<use href="#at" x="598.50" y="199.72"/>
<use href="#at" x="619.27" y="199.72"/>
<use href="#at" x="640.05" y="199.72"/>
<use href="#at" x="660.82" y="199.72"/>
<use href="#at" x="681.60" y="199.72"/>
<use href="#at" x="702.37" y="199.72"/>
<use href="#at" x="723.14" y="199.72"/>
<use href="#at" x="743.92" y="199.72"/>
<use href="#at" x="764.69" y="199.72"/>
<use href="#at" x="785.47" y="199.72"/>
<use href="#at" x="806.24" y="199.72"/>
<use href="#at" x="827.01" y="199.72"/>
<use href="#at" x="847.79" y="199.72"/>
<use href="#at" x="868.56" y="199.72"/>
<use href="#at" x="889.34" y="199.72"/>
<use href="#at" x="910.11" y="199.72"/>
<use href="#at" x="930.88" y="199.72"/>
<use href="#at" x="951.66" y="199.72"/>
<use href="#at" x="972.43" y="199.72"/>
<use href="#at" x="993.21" y="199.72"/>
<use href="#at" x="598.50" y="220.50"/>
<use href="#at" x="619.27" y="220.50"/>
<use href="#at" x="640.05" y="220.50"/>
<use href="#at" x="660.82" y="220.50"/>
<use href="#at" x="681.60" y="220.50"/>
<use href="#at" x="702.37" y="220.50"/>
<use href="#at" x="723.14" y="220.50"/>
<use href="#at" x="743.92" y="220.50"/>
<use href="#at" x="764.69" y="220.50"/>
<use href="#at" x="785.47" y="220.50"/>
<use href="#at" x="806.24" y="220.50"/>
<use href="#at" x="827.01" y="220.50"/>
<use href="#at" x="847.79" y="220.50"/>
<use href="#at" x="868.56" y="220.50"/>
<use href="#at" x="889.34" y="220.50"/>
<use href="#at" x="910.11" y="220.50"/>
<use href="#at" x="930.88" y="220.50"/>
<use href="#at" x="951.66" y="220.50"/>
<use href="#at" x="972.43" y="220.50"/>
<use href="#at" x="993.21" y="220.50"/>
<use href="#at" x="598.50" y="241.27"/>
<use href="#at" x="619.27" y="241.27"/>
<use href="#at" x="640.05" y="241.27"/>
<use href="#at" x="660.82" y="241.27"/>
<use href="#at" x="681.60" y="241.27"/>
<use href="#at" x="702.37" y="241.27"/>
<use href="#at" x="723.14" y="241.27"/>
<use href="#at" x="743.92" y="241.27"/>
<use href="#at" x="764.69" y="241.27"/>
<use href="#at" x="785.47" y="241.27"/>
<use href="#at" x="806.24" y="241.27"/>
<use href="#at" x="827.01" y="241.27"/>
<use href="#at" x="847.79" y="241.27"/>
<use href="#at" x="868.56" y="241.27"/>
<use href="#at" x="889.34" y="241.27"/>
<use href="#at" x="910.11" y="241.27"/>
<use href="#at" x="930.88" y="241.27"/>
<use href="#at" x="951.66" y="241.27"/>
<use href="#at" x="972.43" y="241.27"/>
<use href="#at" x="993.21" y="241.27"/>
<use href="#at" x="598.50" y="262.04"/>
<use href="#at" x="619.27" y="262.04"/>
<use href="#at" x="640.05" y="262.04"/>
<use href="#at" x="660.82" y="262.04"/>
<use href="#at" x="681.60" y="262.04"/>
<use href="#at" x="702.37" y="262.04"/>
<use href="#at" x="723.14" y="262.04"/>
<use href="#at" x="743.92" y="262.04"/>
<use href="#at" x="764.69" y="262.04"/>
<use href="#at" x="785.47" y="262.04"/>
<use href="#at" x="806.24" y="262.04"/>
<use href="#at" x="827.01" y="262.04"/>
<use href="#at" x="847.79" y="262.04"/>
<use href="#at" x="868.56" y="262.04"/>
<use href="#at" x="889.34" y="262.04"/>
<use href="#at" x="910.11" y="262.04"/>
<use href="#at" x="930.88" y="262.04"/>
<use href="#at" x="951.66" y="262.04"/>
<use href="#at" x="972.43" y="262.04"/>
<use href="#at" x="993.21" y="262.04"/>
<use href="#at" x="598.50" y="282.82"/>
<use href="#at" x="619.27" y="282.82"/>
<use href="#at" x="640.05" y="282.82"/>
<use href="#at" x="660.82" y="282.82"/>
<use href="#at" x="681.60" y="282.82"/>
<use href="#at" x="702.37" y="282.82"/>
<use href="#at" x="723.14" y="282.82"/>
<use href="#at" x="743.92" y="282.82"/>
<use href="#at" x="764.69" y="282.82"/>
<use href="#at" x="785.47" y="282.82"/>
<use href="#at" x="806.24" y="282.82"/>
<use href="#at" x="827.01" y="282.82"/>
<use href="#at" x="847.79" y="282.82"/>
<use href="#at" x="868.56" y="282.82"/>
<use href="#at" x="889.34" y="282.82"/>
<use href="#at" x="910.11" y="282.82"/>
<use href="#at" x="930.88" y="282.82"/>
<use href="#at" x="951.66" y="282.82"/>
<use href="#at" x="972.43" y="282.82"/>
<use href="#at" x="993.21" y="282.82"/>
<use href="#at" x="598.50" y="303.59"/>
<use href="#at" x="619.27" y="303.59"/>
<use href="#at" x="640.05" y="303.59"/>
<use href="#at" x="660.82" y="303.59"/>
<use href="#at" x="681.60" y="303.59"/>
<use href="#at" x="702.37" y="303.59"/>
<use href="#at" x="723.14" y="303.59"/>
<use href="#at" x="743.92" y="303.59"/>
<use href="#at" x="764.69" y="303.59"/>
<use href="#at" x="785.47" y="303.59"/>
<use href="#at" x="806.24" y="303.59"/>
<use href="#at" x="827.01" y="303.59"/>
<use href="#at" x="847.79" y="303.59"/>
<use href="#at" x="868.56" y="303.59"/>
<use href="#at" x="889.34" y="303.59"/>
<use href="#at" x="910.11" y="303.59"/>
<use href="#at" x="930.88" y="303.59"/>
<use href="#at" x="951.66" y="303.59"/>
<use href="#at" x="972.43" y="303.59"/>
<use href="#at" x="993.21" y="303.59"/>
<use href="#at" x="598.50" y="324.37"/>
<use href="#at" x="619.27" y="324.37"/>
<use href="#at" x="640.05" y="324.37"/>
<use href="#at" x="660.82" y="324.37"/>
<use href="#at" x="681.60" y="324.37"/>
<use href="#at" x="702.37" y="324.37"/>
<use href="#at" x="723.14" y="324.37"/>
<use href="#at" x="743.92" y="324.37"/>
<use href="#at" x="764.69" y="324.37"/>
<use href="#at" x="785.47" y="324.37"/>
<use href="#at" x="806.24" y="324.37"/>
<use href="#at" x="827.01" y="324.37"/>
<use href="#at" x="847.79" y="324.37"/>
<use href="#at" x="868.56" y="324.37"/>
<use href="#at" x="889.34" y="324.37"/>
<use href="#at" x="910.11" y="324.37"/>
<use href="#at" x="930.88" y="324.37"/>
<use href="#at" x="951.66" y="324.37"/>
<use href="#at" x="972.43" y="324.37"/>
<use href="#at" x="993.21" y="324.37"/>
<use href="#at" x="598.50" y="345.14"/>
<use href="#at" x="619.27" y="345.14"/>
<use href="#at" x="640.05" y="345.14"/>
<use href="#at" x="660.82" y="345.14"/>
<use href="#at" x="681.60" y="345.14"/>
<use href="#at" x="702.37" y="345.14"/>
<use href="#at" x="723.14" y="345.14"/>
<use href="#at" x="743.92" y="345.14"/>
<use href="#at" x="764.69" y="345.14"/>
<use href="#at" x="785.47" y="345.14"/>
<use href="#at" x="806.24" y="345.14"/>
<use href="#at" x="827.01" y="345.14"/>
<use href="#at" x="847.79" y="345.14"/>
<use href="#at" x="868.56" y="345.14"/>
<use href="#at" x="889.34" y="345.14"/>
<use href="#at" x="910.11" y="345.14"/>
<use href="#at" x="930.88" y="345.14"/>
<use href="#at" x="951.66" y="345.14"/>
<use href="#at" x="972.43" y="345.14"/>
<use href="#at" x="993.21" y="345.14"/>
<use href="#at" x="598.50" y="365.91"/>
<use href="#at" x="619.27" y="365.91"/>
<use href="#at" x="640.05" y="365.91"/>
<use href="#at" x="660.82" y="365.91"/>
<use href="#at" x="681.60" y="365.91"/>
<use href="#at" x="702.37" y="365.91"/>
<use href="#at" x="723.14" y="365.91"/>
<use href="#at" x="743.92" y="365.91"/>
<use href="#at" x="764.69" y="365.91"/>
<use href="#at" x="785.47" y="365.91"/>
<use href="#at" x="806.24" y="365.91"/>
<use href="#at" x="827.01" y="365.91"/>
<use href="#at" x="847.79" y="365.91"/>
<use href="#at" x="868.56" y="365.91"/>
<use href="#at" x="889.34" y="365.91"/>
<use href="#at" x="910.11" y="365.91"/>
<use href="#at" x="930.88" y="365.91"/>
<use href="#at" x="951.66" y="365.91"/>
<use href="#at" x="972.43" y="365.91"/>
<use href="#at" x="993.21" y="365.91"/>
<use href="#at" x="598.50" y="386.69"/>
<use href="#at" x="619.27" y="386.69"/>
<use href="#at" x="640.05" y="386.69"/>
<use href="#at" x="660.82" y="386.69"/>
<use href="#at" x="681.60" y="386.69"/>
<use href="#at" x="702.37" y="386.69"/>
<use href="#at" x="723.14" y="386.69"/>
<use href="#at" x="743.92" y="386.69"/>
<use href="#at" x="764.69" y="386.69"/>
<use href="#at" x="785.47" y="386.69"/>
<use href="#at" x="806.24" y="386.69"/>
<use href="#at" x="827.01" y="386.69"/>
<use href="#at" x="847.79" y="386.69"/>
<use href="#at" x="868.56" y="386.69"/>
<use href="#at" x="889.34" y="386.69"/>
<use href="#at" x="910.11" y="386.69"/>
<use href="#at" x="930.88" y="386.69"/>
<use href="#at" x="951.66" y="386.69"/>
<use href="#at" x="972.43" y="386.69"/>
<use href="#at" x="993.21" y="386.69"/>
<use href="#at" x="598.50" y="407.46"/>
<use href="#at" x="619.27" y="407.46"/>
<use href="#at" x="640.05" y="407.46"/>
<use href="#at" x="660.82" y="407.46"/>
<use href="#at" x="681.60" y="407.46"/>
<use href="#at" x="702.37" y="407.46"/>
<use href="#at" x="723.14" y="407.46"/>
<use href="#at" x="743.92" y="407.46"/>
<use href="#at" x="764.69" y="407.46"/>
<use href="#at" x="785.47" y="407.46"/>
<use href="#at" x="806.24" y="407.46"/>
<use href="#at" x="827.01" y="407.46"/>
<use href="#at" x="847.79" y="407.46"/>
<use href="#at" x="868.56" y="407.46"/>
<use href="#at" x="889.34" y="407.46"/>
<use href="#at" x="910.11" y="407.46"/>
<use href="#at" x="930.88" y="407.46"/>
<use href="#at" x="951.66" y="407.46"/>
<use href="#at" x="972.43" y="407.46"/>
<use href="#at" x="993.21" y="407.46"/>
<use href="#at" x="598.50" y="428.24"/>
<use href="#at" x="619.27" y="428.24"/>
<use href="#at" x="640.05" y="428.24"/>
<use href="#at" x="660.82" y="428.24"/>
<use href="#at" x="681.60" y="428.24"/>
<use href="#at" x="702.37" y="428.24"/>
<use href="#at" x="723.14" y="428.24"/>
<use href="#at" x="743.92" y="428.24"/>
<use href="#at" x="764.69" y="428.24"/>
<use href="#at" x="785.47" y="428.24"/>
<use href="#at" x="806.24" y="428.24"/>
<use href="#at" x="827.01" y="428.24"/>
<use href="#at" x="847.79" y="428.24"/>
<use href="#at" x="868.56" y="428.24"/>
<use href="#at" x="889.34" y="428.24"/>
<use href="#at" x="910.11" y="428.24"/>
<use href="#at" x="930.88" y="428.24"/>
<use href="#at" x="951.66" y="428.24"/>
<use href="#at" x="972.43" y="428.24"/>
<use href="#at" x="993.21" y="428.24"/>
<use href="#at" x="598.50" y="449.01"/>
<use href="#at" x="619.27" y="449.01"/>
<use href="#at" x="640.05" y="449.01"/>
<use href="#at" x="660.82" y="449.01"/>
<use href="#at" x="681.60" y="449.01"/>
<use href="#at" x="702.37" y="449.01"/>
<use href="#at" x="723.14" y="449.01"/>
<use href="#at" x="743.92" y="449.01"/>
<use href="#at" x="764.69" y="449.01"/>
<use href="#at" x="785.47" y="449.01"/>
<use href="#at" x="806.24" y="449.01"/>
<use href="#at" x="827.01" y="449.01"/>
<use href="#at" x="847.79" y="449.01"/>
<use href="#at" x="868.56" y="449.01"/>
<use href="#at" x="889.34" y="449.01"/>
<use href="#at" x="910.11" y="449.01"/>
<use href="#at" x="930.88" y="449.01"/>
<use href="#at" x="951.66" y="449.01"/>
<use href="#at" x="972.43" y="449.01"/>
<use href="#at" x="993.21" y="449.01"/>
<use href="#at" x="598.50" y="469.78"/>
<use href="#at" x="619.27" y="469.78"/>
<use href="#at" x="640.05" y="469.78"/>
<use href="#at" x="660.82" y="469.78"/>
<use href="#at" x="681.60" y="469.78"/>
<use href="#at" x="702.37" y="469.78"/>
<use href="#at" x="723.14" y="469.78"/>
<use href="#at" x="743.92" y="469.78"/>
<use href="#at" x="764.69" y="469.78"/>
<use href="#at" x="785.47" y="469.78"/>
<use href="#at" x="806.24" y="469.78"/>
<use href="#at" x="827.01" y="469.78"/>
<use href="#at" x="847.79" y="469.78"/>
<use href="#at" x="868.56" y="469.78"/>
<use href="#at" x="889.34" y="469.78"/>
<use href="#at" x="910.11" y="469.78"/>
<use href="#at" x="930.88" y="469.78"/>
<use href="#at" x="951.66" y="469.78"/>
<use href="#at" x="972.43" y="469.78"/>
<use href="#at" x="993.21" y="469.78"/>
<use href="#at" x="598.50" y="490.56"/>
<use href="#at" x="619.27" y="490.56"/>
<use href="#at" x="640.05" y="490.56"/>
<use href="#at" x="660.82" y="490.56"/>
<use href="#at" x="681.60" y="490.56"/>
<use href="#at" x="702.37" y="490.56"/>
<use href="#at" x="723.14" y="490.56"/>
<use href="#at" x="743.92" y="490.56"/>
<use href="#at" x="764.69" y="490.56"/>
<use href="#at" x="785.47" y="490.56"/>
<use href="#at" x="806.24" y="490.56"/>
<use href="#at" x="827.01" y="490.56"/>
<use href="#at" x="847.79" y="490.56"/>
<use href="#at" x="868.56" y="490.56"/>
<use href="#at" x="889.34" y="490.56"/>
<use href="#at" x="910.11" y="490.56"/>
<use href="#at" x="930.88" y="490.56"/>
<use href="#at" x="951.66" y="490.56"/>
<use href="#at" x="972.43" y="490.56"/>
<use href="#at" x="993.21" y="490.56"/>
<use href="#at" x="598.50" y="511.33"/>
<use href="#at" x="619.27" y="511.33"/>
<use href="#at" x="640.05" y="511.33"/>
<use href="#at" x="660.82" y="511.33"/>
<use href="#at" x="681.60" y="511.33"/>
<use href="#at" x="702.37" y="511.33"/>
<use href="#at" x="723.14" y="511.33"/>
<use href="#at" x="743.92" y="511.33"/>
<use href="#at" x="764.69" y="511.33"/>
<use href="#at" x="785.47" y="511.33"/>
<use href="#at" x="806.24" y="511.33"/>
<use href="#at" x="827.01" y="511.33"/>
<use href="#at" x="847.79" y="511.33"/>
<use href="#at" x="868.56" y="511.33"/>
<use href="#at" x="889.34" y="511.33"/>
<use href="#at" x="910.11" y="511.33"/>
<use href="#at" x="930.88" y="511.33"/>
<use href="#at" x="951.66" y="511.33"/>
<use href="#at" x="972.43" y="511.33"/>
<use href="#at" x="993.21" y="511.33"/>
<use href="#at" x="598.50" y="532.11"/>
<use href="#at" x="619.27" y="532.11"/>
<use href="#at" x="640.05" y="532.11"/>
<use href="#at" x="660.82" y="532.11"/>
<use href="#at" x="681.60" y="532.11"/>
<use href="#at" x="702.37" y="532.11"/>
<use href="#at" x="723.14" y="532.11"/>
<use href="#at" x="743.92" y="532.11"/>
<use href="#at" x="764.69" y="532.11"/>
<use href="#at" x="785.47" y="532.11"/>
<use href="#at" x="806.24" y="532.11"/>
<use href="#at" x="827.01" y="532.11"/>
<use href="#at" x="847.79" y="532.11"/>
<use href="#at" x="868.56" y="532.11"/>
<use href="#at" x="889.34" y="532.11"/>
<use href="#at" x="910.11" y="532.11"/>
<use href="#at" x="930.88" y="532.11"/>
<use href="#at" x="951.66" y="532.11"/>
<use href="#at" x="972.43" y="532.11"/>
<use href="#at" x="993.21" y="532.11"/>
<circle cx="594.6" cy="537" r="3.6" fill="none" stroke="#e8e8e8" stroke-width="1.1"/>
<path d="M592.2,540 L594.2,535 L596.4,540" fill="none" stroke="#e00000" stroke-width="1.4"/>
<g fill="none" stroke="#fff" stroke-width="2">
<path d="M599,117 H1014 V532 H599 Z"/>
</g>
<use href="#at" x="598.50" y="532.11"/><use href="#at" x="640.05" y="532.11"/><use href="#at" x="681.60" y="532.11"/><use href="#at" x="723.14" y="532.11"/><use href="#at" x="764.69" y="532.11"/><use href="#at" x="806.24" y="532.11"/><use href="#at" x="847.79" y="532.11"/><use href="#at" x="889.34" y="532.11"/><use href="#at" x="930.88" y="532.11"/><use href="#at" x="972.43" y="532.11"/>
<text x="592.6" y="124.4" font-family="Liberation Sans" font-size="9.6" fill="#00c800">B</text>
<path d="M1020.4,534.2 A3.3,3.6 0 1 0 1020.6,538.6" fill="none" stroke="#0a7ad0" stroke-width="1.4"/>
<!-- axes -->
<path d="M316.6,529.6 V507" stroke="#00c000" stroke-width="3"/>
<path d="M313.2,506.6 H320.2 L316.7,496.2 Z" fill="#00c000"/>
<path d="M317,529.6 H343.6" stroke="#e6e000" stroke-width="3"/>
<path d="M344.4,526.6 V533.2 L356.4,529.8 Z" fill="#e6e000"/>
<circle cx="316.7" cy="529.8" r="3" fill="none" stroke="#d8d8d8" stroke-width="1.3"/>
<g font-family="Liberation Serif" fill="#dcdcdc" font-size="11.5">
<text x="317.4" y="499.4">Y</text><text x="317.6" y="528.6" font-size="9.5">X</text><text x="354.2" y="530.4">Z</text>
</g>
</svg>
<!-- Job manager -->
<div class="a" style="left:270px;top:574px;width:1072px;height:19px;background:#dadada;border:1px solid #c4c4c4"></div>
<div class="t m" style="left:275px;top:580px;font-size:11px;-webkit-text-stroke:0.15px #000">Job Manager</div>
<svg class="a" style="left:1306px;top:574px" width="36" height="19">
<path d="M9.9,8.2 V5.7 H14.5 V10.1 H12.6" fill="none" stroke="#000" stroke-width="1.5"/>
<rect x="7.6" y="8.8" width="4.6" height="4.6" fill="none" stroke="#000" stroke-width="1.6"/>
<path d="M23.4,6.2 L30.4,13.2 M30.4,6.2 L23.4,13.2" stroke="#000" stroke-width="1.6"/>
</svg>
<div class="t m" style="left:803px;top:606px;font-size:11px">log in local successfully</div>
<div class="a" style="left:1216px;top:595px;width:1px;height:32px;background:#b0b0b0"></div><div class="a" style="left:1217px;top:595px;width:1px;height:1px;background:#b0b0b0"></div>
<div class="a" style="left:1217px;top:596px;width:1px;height:31px;background:#fff"></div>
<div class="a" style="left:1267px;top:595px;width:1px;height:32px;background:#b0b0b0"></div><div class="a" style="left:1268px;top:595px;width:1px;height:1px;background:#b0b0b0"></div>
<div class="a" style="left:1268px;top:596px;width:1px;height:31px;background:#fff"></div>
<div class="a" style="left:1220px;top:600px;width:22px;height:22px;background:#d0d0d0;border:1px solid #c4c4c4"></div>
<div class="a" style="left:1244px;top:600px;width:22px;height:22px;background:#d0d0d0;border:1px solid #c4c4c4"></div>
<div class="a" style="left:1271px;top:600px;width:22px;height:22px;background:#e8e8e8;border:1px solid #c0c0c0"></div>
<div class="a" style="left:1295px;top:600px;width:22px;height:22px;background:#d0d0d0;border:1px solid #c4c4c4"></div>
<div class="a" style="left:1319px;top:600px;width:22px;height:22px;background:#e8e8e8;border:1px solid #c0c0c0"></div>
<svg class="a" style="left:1220px;top:600px" width="122" height="22">
<g fill="none" stroke-linejoin="round">
<path d="M4,4 L9,4 L9,8 M4,4 L4,9" stroke="#a8a8a8" stroke-width="1.5"/>
<rect x="7" y="9" width="8" height="7" fill="#a8a8a8"/>
<path d="M13,14 L17,17 L13,19" stroke="#a8a8a8" stroke-width="1.5"/>
<path d="M29,16 L34,11 M33,7 H40 V13 H35 Z M29,12 H34 V18 H27 Z M27,19 H36" stroke="#a8a8a8" stroke-width="1.2"/>
<g transform="translate(62,10.8)" stroke="#394049" stroke-width="1.1"><circle r="2.6"/><path d="M5.11,-1.75 L7.06,-1.43 L7.06,1.43 L5.11,1.75 L4.85,2.38 L6.00,3.98 L3.98,6.00 L2.38,4.85 L1.75,5.11 L1.43,7.06 L-1.43,7.06 L-1.75,5.11 L-2.38,4.85 L-3.98,6.00 L-6.00,3.98 L-4.85,2.38 L-5.11,1.75 L-7.06,1.43 L-7.06,-1.43 L-5.11,-1.75 L-4.85,-2.38 L-6.00,-3.98 L-3.98,-6.00 L-2.38,-4.85 L-1.75,-5.11 L-1.43,-7.06 L1.43,-7.06 L1.75,-5.11 L2.38,-4.85 L3.98,-6.00 L6.00,-3.98 L4.85,-2.38 Z"/></g>
<path d="M80,7 H83 Q86,7 87,11 Q88,15 91,15 H95 M80,15 H83 Q85,15 86,13 M88,9 Q89,7 91,7 H95 M93,5 L96,7 L93,9 M93,13 L96,15 L93,17" stroke="#9a9a9a" stroke-width="1.1"/>
<path d="M102.6,12.4 Q102.4,6.4 109.4,6 Q113,5.8 115.4,7.4 M113.4,4.4 L116.6,7.6 L112.6,9.2 M117.4,9.6 Q117.8,15.8 110.6,16.2 Q107,16.4 104.6,14.8 M106.6,17.8 L103.4,14.6 L107.4,13" stroke="#394049" stroke-width="1.3"/><path d="M104,10.6 Q105.6,9 109,9.2 Q111.6,9.4 113.6,10.6 M116,11.6 Q114.4,13.2 111,13 Q108.4,12.8 106.4,11.6" stroke="#394049" stroke-width="1"/>
</g>
</svg>
<div class="a" style="left:270px;top:627px;width:1072px;height:192px;background:#cfe8c9;border:1px solid #8a929c"></div>
<div class="a" style="left:271px;top:628px;width:1070px;height:25px;background:#fff"></div>
<div class="a" style="left:420px;top:628px;width:1px;height:25px;background:#dcdcdc"></div>
<div class="a" style="left:1032px;top:628px;width:1px;height:25px;background:#dcdcdc"></div>
<div class="a" style="left:1132px;top:628px;width:1px;height:25px;background:#dcdcdc"></div>
<div class="t" style="left:313px;top:634px;font-size:13px">Description</div>
<div class="t" style="left:710px;top:634px;font-size:13px">Script</div>
<div class="t" style="left:1065px;top:634px;font-size:13px">Status</div>
<div class="t" style="left:1216px;top:634px;font-size:13px">Actions</div>
<!-- size grip -->
<svg class="a" style="left:1328px;top:828px" width="14" height="13" fill="#b4b4b4">
<rect x="9" y="3" width="2" height="2"/><rect x="6" y="6" width="2" height="2"/><rect x="9" y="6" width="2" height="2"/>
<rect x="3" y="9" width="2" height="2"/><rect x="6" y="9" width="2" height="2"/><rect x="9" y="9" width="2" height="2"/>
</svg>

</body></html>
